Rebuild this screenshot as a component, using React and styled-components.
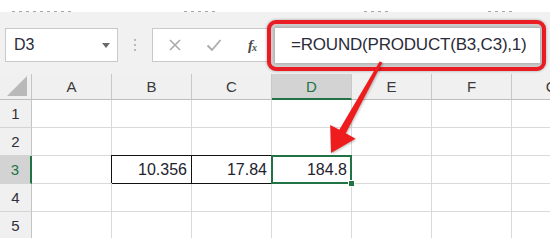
import React from "react";
import styled, { createGlobalStyle } from "styled-components";

const Global = createGlobalStyle`
  html, body { margin: 0; padding: 0; background: #ffffff; }
  body { font-family: "Liberation Sans", Arial, sans-serif; overflow: hidden; }
`;

const Page = styled.div`
  position: relative;
  width: 550px;
  height: 250px;
  overflow: hidden;
  background: #ffffff;
  display: flex;
  flex-direction: column;
`;

const TopStrip = styled.div`
  height: 12px;
  display: flex;
  align-items: flex-end;
  background: #ffffff;
`;

const Fragment = styled.div`
  height: 1px;
  margin-left: ${(p) => p.$ml}px;
  width: ${(p) => p.$w}px;
  background: repeating-linear-gradient(
    90deg,
    #6a6a6a 0 3px,
    transparent 3px 7px
  );
  opacity: 0.6;
`;

const FormulaBar = styled.div`
  height: 62px;
  box-sizing: border-box;
  background: #f1f1f1;
  display: flex;
  align-items: center;
  padding: 4px 0 0 5px;
`;

const NameBox = styled.div`
  width: 113px;
  height: 34px;
  box-sizing: border-box;
  background: #ffffff;
  border: 1px solid #c9c9c9;
  display: flex;
  align-items: center;
  justify-content: space-between;
  padding: 0 7px 0 8px;
  font-size: 16px;
  color: #2b2b3a;
`;

const Caret = styled.span`
  width: 0;
  height: 0;
  border-left: 4px solid transparent;
  border-right: 4px solid transparent;
  border-top: 5px solid #6b6b6b;
`;

const Separator = styled.div`
  width: 34px;
  display: flex;
  flex-direction: column;
  align-items: center;
  gap: 3px;
`;

const Dot = styled.span`
  width: 2px;
  height: 2px;
  background: #a6a6a6;
  border-radius: 1px;
`;

const FuncBox = styled.div`
  width: 118px;
  height: 34px;
  box-sizing: border-box;
  background: #ffffff;
  border: 1px solid #c9c9c9;
  display: flex;
  align-items: center;
  padding-left: 15px;
  gap: 24px;
`;

const FxLabel = styled.span`
  font-family: "Liberation Serif", "Times New Roman", serif;
  font-style: italic;
  font-weight: bold;
  font-size: 15px;
  color: #4a4a4a;
  letter-spacing: -1px;
  margin-left: 2px;
  sub {
    font-size: 10px;
    vertical-align: -1px;
  }
`;

const RedFrame = styled.div`
  width: 279px;
  height: 51px;
  margin-left: -3px;
  box-sizing: border-box;
  border: 4px solid #ea1c24;
  border-radius: 9px;
  background: #cfcfcf;
  box-shadow: 0 0 3px rgba(0, 0, 0, 0.35);
  padding: 4px 2px 4px 4px;
  display: flex;
`;

const FormulaInput = styled.div`
  flex: 1;
  background: #ffffff;
  box-shadow: 0 0 3px 1px rgba(0, 0, 0, 0.18);
  display: flex;
  align-items: center;
  padding-left: 16px;
  font-size: 17px;
  letter-spacing: -0.2px;
  color: #2b2b3a;
  white-space: nowrap;
`;

const Grid = styled.div`
  height: 164px;
  overflow: hidden;
  display: grid;
  grid-template-columns: 32px repeat(7, 80px);
  grid-template-rows: 26px repeat(5, 28px);
`;

const Corner = styled.div`
  background: #f0f0f0;
  border-right: 1px solid #c4c4c4;
  border-bottom: 1px solid #bdbdbd;
  box-sizing: border-box;
  display: flex;
  align-items: flex-end;
  justify-content: flex-end;
  padding: 0 4px 3px 0;
`;

const ColHeader = styled.div`
  box-sizing: border-box;
  background: ${(p) => (p.$active ? "#d3d3d3" : "#f0f0f0")};
  border-right: 1px solid #c9c9c9;
  border-bottom: ${(p) => (p.$active ? "2px solid #217346" : "1px solid #bdbdbd")};
  color: ${(p) => (p.$active ? "#217346" : "#3a3a3a")};
  font-size: 15px;
  display: flex;
  align-items: center;
  justify-content: center;
`;

const RowHeader = styled.div`
  box-sizing: border-box;
  background: ${(p) => (p.$active ? "#d3d3d3" : "#f0f0f0")};
  border-right: ${(p) => (p.$active ? "2px solid #217346" : "1px solid #c4c4c4")};
  border-bottom: 1px solid #d4d4d4;
  color: ${(p) => (p.$active ? "#217346" : "#2f2f3a")};
  font-size: 15px;
  display: flex;
  align-items: center;
  justify-content: center;
`;

const Cell = styled.div`
  position: ${(p) => (p.$selected ? "relative" : "static")};
  box-sizing: border-box;
  background: #ffffff;
  border-right: 1px solid ${(p) => (p.$boxed ? "#111" : "#d9d9d9")};
  border-bottom: 1px solid ${(p) => (p.$boxed ? "#111" : "#d9d9d9")};
  box-shadow: ${(p) => (p.$boxed ? "-1px -1px 0 0 #111" : "none")};
  display: flex;
  align-items: center;
  justify-content: flex-end;
  padding-right: 4px;
  font-size: 16px;
  color: #22222e;
  &::after {
    content: "";
    display: ${(p) => (p.$selected ? "block" : "none")};
    position: absolute;
    top: -1px;
    left: -1px;
    right: -1px;
    bottom: -1px;
    border: 2px solid #217346;
    pointer-events: none;
  }
`;

const FillHandle = styled.span`
  position: absolute;
  right: -4px;
  bottom: -4px;
  width: 5px;
  height: 5px;
  background: #217346;
  border: 1px solid #ffffff;
  z-index: 2;
`;

const Overlay = styled.svg`
  position: absolute;
  left: 0;
  top: 0;
  pointer-events: none;
  filter: drop-shadow(1px 1px 1px rgba(0, 0, 0, 0.25));
`;

const columns = ["A", "B", "C", "D", "E", "F", "G"];
const data = { B3: "10.356", C3: "17.84", D3: "184.8" };

export default function App() {
  return (
    <Page>
      <Global />
      <TopStrip>
        <Fragment $ml={12} $w={62} />
        <Fragment $ml={110} $w={34} />
        <Fragment $ml={146} $w={24} />
        <Fragment $ml={100} $w={28} />
      </TopStrip>
      <FormulaBar>
        <NameBox>
          <span>D3</span>
          <Caret />
        </NameBox>
        <Separator>
          <Dot />
          <Dot />
          <Dot />
        </Separator>
        <FuncBox>
          <svg width="14" height="14" viewBox="0 0 14 14">
            <path d="M2 2 L12 12 M12 2 L2 12" stroke="#ababab" strokeWidth="1.6" fill="none" />
          </svg>
          <svg width="16" height="14" viewBox="0 0 16 14">
            <path d="M1.5 7.5 L6 12 L14.5 2" stroke="#ababab" strokeWidth="1.8" fill="none" />
          </svg>
          <FxLabel>
            f<sub>x</sub>
          </FxLabel>
        </FuncBox>
        <RedFrame>
          <FormulaInput>=ROUND(PRODUCT(B3,C3),1)</FormulaInput>
        </RedFrame>
      </FormulaBar>
      <Grid>
        <Corner>
          <svg width="20" height="20" viewBox="0 0 20 20">
            <polygon points="0,20 20,20 20,0" fill="#b9b9b9" />
          </svg>
        </Corner>
        {columns.map((c) => (
          <ColHeader key={c} $active={c === "D"}>
            {c}
          </ColHeader>
        ))}
        {[1, 2, 3, 4, 5].map((r) => (
          <React.Fragment key={r}>
            <RowHeader $active={r === 3}>{r}</RowHeader>
            {columns.map((c) => {
              const id = c + r;
              const selected = id === "D3";
              return (
                <Cell key={id} $boxed={id === "B3" || id === "C3"} $selected={selected}>
                  {data[id] || ""}
                  {selected && <FillHandle />}
                </Cell>
              );
            })}
          </React.Fragment>
        ))}
      </Grid>
      <Overlay width="550" height="250" viewBox="0 0 550 250">
        <polygon
          points="379.6,61.4 382.4,62.6 345.8,133.2 355.5,138.8 331,153 330.2,125 339.3,129.8"
          fill="#ee1c1c"
        />
      </Overlay>
    </Page>
  );
}
